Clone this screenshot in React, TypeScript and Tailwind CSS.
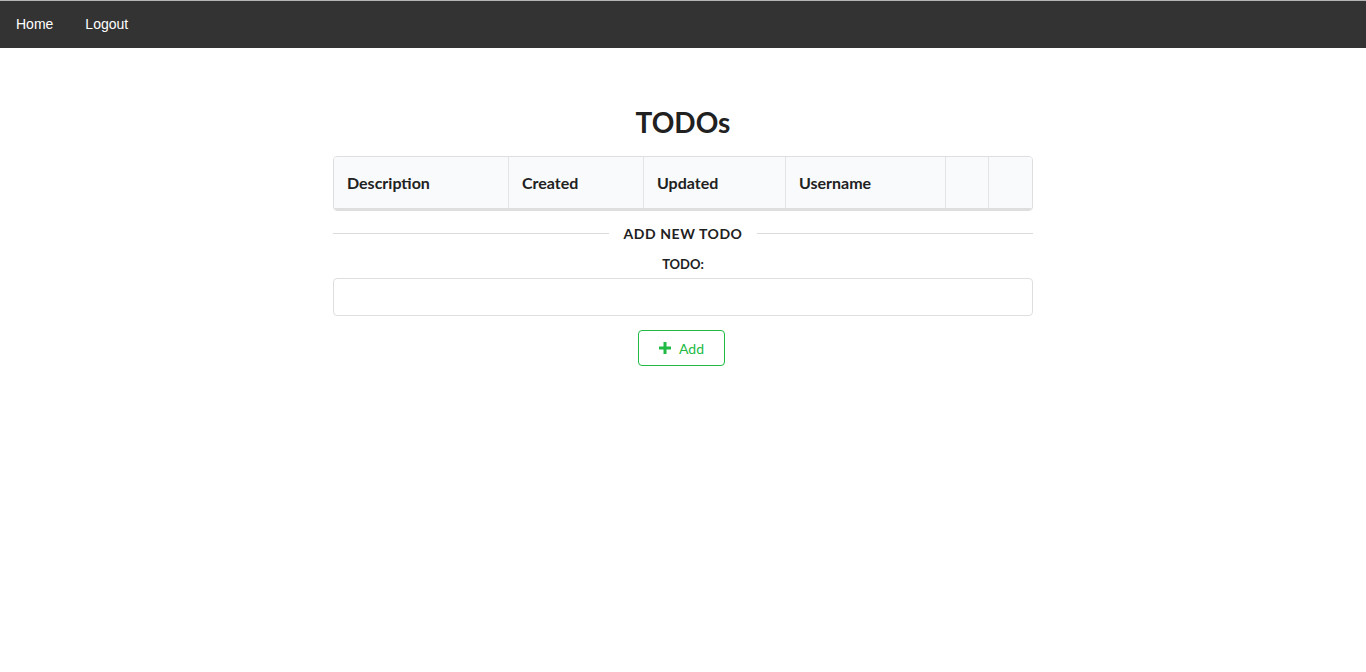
import React from "react";

export default function App() {
  const lato = { fontFamily: "Lato, 'Helvetica Neue', Arial, sans-serif" };
  return (
    <div className="min-h-screen bg-white text-[#212121]" style={lato}>
      <nav className="h-[48px] bg-[#333333] border-t border-[#b5b5b5] flex items-center px-[16px] gap-[32px]">
        <a className="text-[14px] text-white" style={{ fontFamily: "'Liberation Sans', Arial, sans-serif" }}>Home</a>
        <a className="text-[14px] text-white" style={{ fontFamily: "'Liberation Sans', Arial, sans-serif" }}>Logout</a>
      </nav>
      <main className="w-[700px] mx-auto pt-[56px]">
        <h1 className="text-[28px] font-bold text-center leading-[36px] mb-[16px]">TODOs</h1>
        <div className="border border-[#dedede] rounded-[4px] overflow-hidden">
          <div className="grid grid-cols-[174px_135px_142px_160px_43px_1fr] bg-[#f9fafb] border-b-2 border-[#dedede] h-[53px] text-[16px] font-bold">
            <div className="flex items-center px-[13px]">Description</div>
            <div className="flex items-center px-[13px] border-l border-[#e4e4e4]">Created</div>
            <div className="flex items-center px-[13px] border-l border-[#e4e4e4]">Updated</div>
            <div className="flex items-center px-[13px] border-l border-[#e4e4e4]">Username</div>
            <div className="border-l border-[#e4e4e4]"></div>
            <div className="border-l border-[#e4e4e4]"></div>
          </div>
        </div>
        <div className="flex items-center mt-[12px] h-[20px]">
          <div className="flex-1 h-px bg-[#dcdcdc]"></div>
          <span className="px-[15px] text-[14px] font-bold tracking-[0.04em] uppercase">Add new todo</span>
          <div className="flex-1 h-px bg-[#dcdcdc]"></div>
        </div>
        <div className="text-center text-[13px] font-bold mt-[13px] leading-[16px]">TODO:</div>
        <input className="mt-[6px] w-full h-[38px] border border-[#dedede] rounded-[4px] outline-none px-[14px]" />
        <div className="flex justify-center mt-[14px] pr-[3px]">
          <button className="h-[36px] w-[87px] border border-[#21ba45] rounded-[4px] text-[#21ba45] text-[14px] flex items-center justify-center gap-[8px] bg-white">
            <svg width="12" height="12" viewBox="0 0 12 12">
              <path d="M4.5 0h3v4.5H12v3H7.5V12h-3V7.5H0v-3h4.5z" fill="#21ba45" />
            </svg>
            <span>Add</span>
          </button>
        </div>
      </main>
    </div>
  );
}
